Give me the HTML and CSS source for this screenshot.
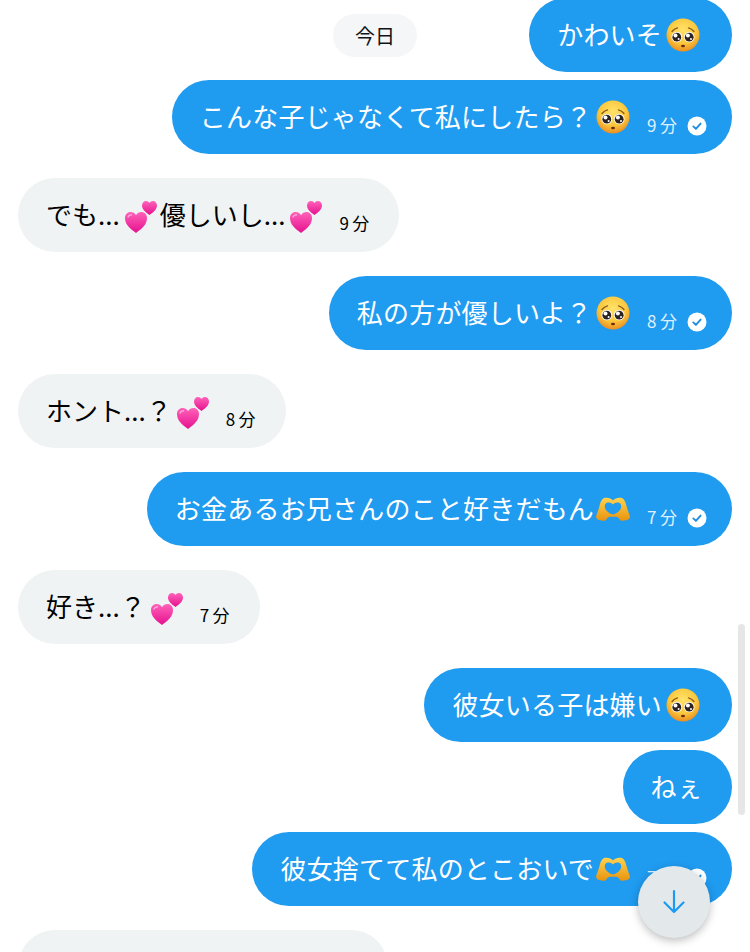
FILE: index.html
```html
<!DOCTYPE html>
<html lang="ja">
    <head>
        <meta charset="UTF-8">
        <title>DM</title>
        <link rel="stylesheet" href="styles.css">
    </head>
    <body>
        <svg class="defs" width="0" height="0">
            <defs>
                <radialGradient id="faceFill" cx="50%" cy="35%" r="68%">
                    <stop offset="0" stop-color="#ffe36a"/>
                    <stop offset="0.6" stop-color="#fbc73c"/>
                    <stop offset="1" stop-color="#e8871f"/>
                </radialGradient>
                <linearGradient id="heartFill" x1="0" y1="0" x2="0" y2="1">
                    <stop offset="0" stop-color="#ff62ba"/>
                    <stop offset="1" stop-color="#e5108e"/>
                </linearGradient>
                <linearGradient id="handFill" x1="0" y1="0" x2="0" y2="1">
                    <stop offset="0" stop-color="#ffd34f"/>
                    <stop offset="1" stop-color="#e8930f"/>
                </linearGradient>
                <symbol id="pleading" viewBox="0 0 34 34">
                    <circle cx="17" cy="17" r="16.500" fill="url(#faceFill)"/>
                    <path d="M6 13.500c1.500-2 3.300-3.200 5.500-3.700M28 13.500c-1.500-2-3.300-3.200-5.500-3.700" fill="none" stroke="#8a5a1c" stroke-width="1.300" stroke-linecap="round"/>
                    <circle cx="10.800" cy="19" r="5.300" fill="#fff"/>
                    <circle cx="23.200" cy="19" r="5.300" fill="#fff"/>
                    <circle cx="10.800" cy="19.200" r="4.400" fill="#2c2220"/>
                    <circle cx="23.200" cy="19.200" r="4.400" fill="#2c2220"/>
                    <circle cx="9.500" cy="17.500" r="2" fill="#fff"/>
                    <circle cx="21.900" cy="17.500" r="2" fill="#fff"/>
                    <circle cx="12.600" cy="21" r="1" fill="#fff"/>
                    <circle cx="25" cy="21" r="1" fill="#fff"/>
                    <ellipse cx="17" cy="28" rx="2" ry="1.300" fill="#6b2d12"/>
                </symbol>
                <symbol id="hearts" viewBox="0 0 34 34">
                    <path d="M26.500 15C22 12 19 9 19 5.500 19 3 21 1 23 1c1.500 0 2.800.8 3.500 2 .7-1.200 2-2 3.500-2 2 0 4 2 4 4.500C34 9 31 12 26.500 15z" fill="url(#heartFill)"/>
                    <path d="M13 33C7 28.500 2 24.500 2 18c0-3.500 2.500-6 5.500-6 2.300 0 4.300 1.200 5.500 3.200C14.200 13.200 16.200 12 18.500 12c3 0 5.500 2.500 5.500 6 0 6.500-5 10.500-11 15z" fill="url(#heartFill)"/>
                    <path d="M5 17c.6-1.500 2-2.300 3.500-2.100" fill="none" stroke="#ffb3df" stroke-width="1.300" stroke-linecap="round"/>
                </symbol>
                <symbol id="hands" viewBox="0 0 34 24">
                    <path d="M17 3.600C19 1 22 .3 25 .8c3 .5 4.500 4.200 5.500 8.200 1 4 2.500 7 3.300 10 .5 2-.8 3.600-2.800 4l-4 .8c-2 .2-3-.8-4-2.300-1-1.700-2.500-2-6-1.700-3.500-.3-5 0-6 1.700-1 1.500-2 2.500-4 2.300L3 23c-2-.4-3.300-2-2.800-4C1 16 2.500 13 3.500 9 4.500 5 6 1.300 9 .8c3-.5 6 .2 8 2.800zM17 7.500C15.500 5.500 13 5 11 5.800 9 6.600 8.500 9 9 11c.8 2.500 4 5.500 8 6.500 4-1 7.200-4 8-6.500.5-2 0-4.400-2-5.200-2-.8-4.500-.3-6 1.700z" fill="url(#handFill)" fill-rule="evenodd"/>
                </symbol>
                <symbol id="read" viewBox="0 0 20 20">
                    <circle cx="10" cy="10" r="9.500" fill="#fff"/>
                    <path d="M6.300 10.400l2.600 2.500 4.700-5.300" fill="none" stroke="#1f8fdf" stroke-width="1.900" stroke-linecap="round" stroke-linejoin="round"/>
                </symbol>
            </defs>
        </svg>

        <div class="date">今日</div>

        <div class="chat">
            <div class="row me">
                <div class="bubble">かわいそ<svg class="emoji face"><use href="#pleading"/></svg></div>
            </div>
            <div class="row me">
                <div class="bubble">こんな子じゃなくて私にしたら？<svg class="emoji face"><use href="#pleading"/></svg>
                    <span class="time">9分</span><svg class="read"><use href="#read"/></svg>
                </div>
            </div>
            <div class="row them next">
                <div class="bubble">でも...<svg class="emoji heart"><use href="#hearts"/></svg>優しいし...<svg class="emoji heart"><use href="#hearts"/></svg>
                    <span class="time">9分</span>
                </div>
            </div>
            <div class="row me next">
                <div class="bubble">私の方が優しいよ？<svg class="emoji face"><use href="#pleading"/></svg>
                    <span class="time">8分</span><svg class="read"><use href="#read"/></svg>
                </div>
            </div>
            <div class="row them next">
                <div class="bubble">ホント...？<svg class="emoji heart"><use href="#hearts"/></svg>
                    <span class="time">8分</span>
                </div>
            </div>
            <div class="row me next">
                <div class="bubble">お金あるお兄さんのこと好きだもん<svg class="emoji hand"><use href="#hands"/></svg>
                    <span class="time">7分</span><svg class="read"><use href="#read"/></svg>
                </div>
            </div>
            <div class="row them next">
                <div class="bubble">好き...？<svg class="emoji heart"><use href="#hearts"/></svg>
                    <span class="time">7分</span>
                </div>
            </div>
            <div class="row me next">
                <div class="bubble">彼女いる子は嫌い<svg class="emoji face"><use href="#pleading"/></svg></div>
            </div>
            <div class="row me">
                <div class="bubble">ねぇ</div>
            </div>
            <div class="row me">
                <div class="bubble">彼女捨てて私のとこおいで<svg class="emoji hand"><use href="#hands"/></svg>
                    <span class="time">7分</span><svg class="read"><use href="#read"/></svg>
                </div>
            </div>
            <div class="row them next">
                <div class="bubble blank"></div>
            </div>
        </div>

        <div class="scrollbar"></div>
        <div class="fab">
            <svg width="24" height="26" viewBox="0 0 24 26">
                <path d="M12 2v21M2.500 13.500L12 23l9.500-9.500" fill="none" stroke="#1d9bf0" stroke-width="2.200" stroke-linecap="round" stroke-linejoin="round"/>
            </svg>
        </div>
    </body>
</html>
```

FILE: styles.css
```css
*{
    margin: 0;
    padding: 0;
    box-sizing: border-box;
}
html, body{
    height: 952px;
    overflow: hidden;
}
body{
    position: relative;
    background: #fff;
    font-family: "Noto Sans CJK JP", "Noto Sans", sans-serif;
}
.defs{
    position: absolute;
}
.chat{
    display: flex;
    flex-direction: column;
    height: 954px;
    overflow: hidden;
    margin-top: -2px;
    padding: 0 18px;
}
.row{
    display: flex;
    flex: none;
    margin-top: 8px;
}
.row:first-child{
    margin-top: 0;
}
.row.next{
    margin-top: 24px;
}
.row.me{
    justify-content: flex-end;
}
.bubble{
    display: flex;
    align-items: center;
    height: 74px;
    padding: 0 29px 2px 28px;
    border-radius: 37px;
    font-size: 26px;
    line-height: 34px;
    white-space: nowrap;
}
.me .bubble{
    background: #1f9bf0;
    color: #fff;
    letter-spacing: .2px;
}
.them .bubble{
    background: #eff3f4;
    color: #000;
    padding-right: 30px;
}
.bubble.blank{
    width: 370px;
}
.emoji{
    flex: none;
    width: 34px;
    height: 34px;
}
.emoji.face{
    margin: 2px 3px 0 4px;
}
.emoji.heart{
    margin: 5px 3px 0;
}
.emoji.hand{
    height: 24px;
    margin: 2px 3px 0 2px;
}
.time{
    align-self: flex-end;
    margin: 0 -3.5px 16px 14px;
    font-size: 17px;
    line-height: 22px;
    letter-spacing: 3.5px;
    opacity: .85;
}
.them .time{
    opacity: 1;
}
.read{
    flex: none;
    align-self: flex-end;
    width: 20px;
    height: 20px;
    margin: 0 -4px 16px 10px;
}
.date{
    position: absolute;
    top: 14px;
    left: 333px;
    width: 84px;
    height: 43px;
    border-radius: 22px;
    background: #f5f6f7;
    color: #0f1419;
    font-size: 20px;
    line-height: 43px;
    text-align: center;
}
.scrollbar{
    position: absolute;
    top: 624px;
    left: 738px;
    width: 7px;
    height: 191px;
    border-radius: 4px;
    background: #e6e6e6;
}
.fab{
    position: absolute;
    top: 866px;
    left: 638px;
    display: flex;
    align-items: center;
    justify-content: center;
    width: 72px;
    height: 72px;
    border-radius: 50%;
    background: #e3e8eb;
    box-shadow: 0 3px 8px rgba(0,0,0,.25);
}
```
